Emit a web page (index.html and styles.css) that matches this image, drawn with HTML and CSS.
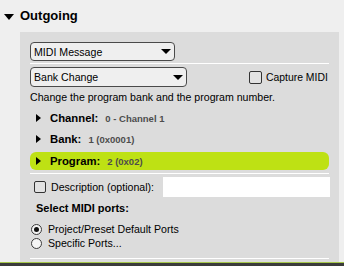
FILE: index.html
```html
<!DOCTYPE html>
<html>
<head>
<meta charset="utf-8">
<link rel="stylesheet" href="styles.css">
</head>
<body>
<div class="header"><span class="caret-down"></span><span class="title">Outgoing</span></div>
<div class="panel">
  <div class="select sel1"><span>MIDI Message</span><span class="arrow"></span></div>
  <div class="hr"></div>
  <div class="row2">
    <div class="select sel2"><span>Bank Change</span><span class="arrow"></span></div>
    <label class="check"><span class="box"></span><span>Capture MIDI</span></label>
  </div>
  <p class="desc">Change the program bank and the program number.</p>
  <div class="param"><span class="tri"></span><b>Channel:</b><span class="val">0 - Channel 1</span></div>
  <div class="param bank"><span class="tri"></span><b>Bank:</b><span class="val">1 (0x0001)</span></div>
  <div class="param active"><span class="tri"></span><b>Program:</b><span class="val">2 (0x02)</span></div>
  <div class="hr hr2"></div>
  <div class="descrow">
    <span class="box"></span><span class="dlabel">Description (optional):</span>
    <div class="input"></div>
  </div>
  <div class="ports-title">Select MIDI ports:</div>
  <div class="radio first"><span class="circle checked"></span><span>Project/Preset Default Ports</span></div>
  <div class="radio"><span class="circle"></span><span>Specific Ports...</span></div>
  <div class="hr hr3"></div>
</div>
<div class="footer"></div>
</body>
</html>
```
FILE: styles.css
```css
html, body { margin: 0; padding: 0; }
body {
  width: 344px;
  height: 266px;
  overflow: hidden;
  background: #efefef;
  font-family: "Liberation Sans", Arial, sans-serif;
  color: #000;
}
.header {
  height: 32px;
  display: flex;
  align-items: center;
  padding-left: 4px;
  box-sizing: border-box;
}
.caret-down {
  width: 0; height: 0;
  border-left: 5.5px solid transparent;
  border-right: 5.5px solid transparent;
  border-top: 6px solid #000;
  margin-top: 1px;
  margin-right: 6px;
}
.title {
  font-size: 13px;
  font-weight: bold;
  line-height: 16px;
}
.panel {
  margin-left: 20px;
  width: 319px;
  height: 230px;
  box-sizing: border-box;
  background: #dcdcdc;
  padding: 10px 10px 0 10px;
}
.select {
  box-sizing: border-box;
  border: 1px solid #4a4a4a;
  border-radius: 4px;
  background: #efefef;
  display: flex;
  align-items: center;
  justify-content: space-between;
  padding: 0 3px 0 3px;
  font-size: 10.6px;
}
.sel1 { width: 145px; height: 19px; }
.sel2 { width: 157px; height: 20px; }
.arrow {
  width: 0; height: 0;
  border-left: 5px solid transparent;
  border-right: 5px solid transparent;
  border-top: 5px solid #000;
}
.hr { height: 1px; background: #fff; margin-top: 2px; }
.row2 { display: flex; align-items: center; margin-top: 3px; height: 20px; }
.check {
  display: flex; align-items: center;
  margin-left: 62px;
  font-size: 10.4px;
}
.box {
  width: 13px; height: 13px;
  box-sizing: border-box;
  border: 1px solid #333;
  border-radius: 2px;
  background: #e2e2e2;
  margin-right: 4px;
  flex: none;
}
.desc {
  margin: 4px 0 0 0;
  font-size: 10.6px;
  line-height: 13px;
}
.param {
  display: flex;
  align-items: center;
  height: 18px;
  margin-top: 5px;
  padding-left: 6px;
  border-radius: 6px;
}
.param.bank { margin-top: 3px; }
.param.active { margin-top: 4px; background: #bee114; }
.tri {
  width: 0; height: 0;
  border-top: 4.5px solid transparent;
  border-bottom: 4.5px solid transparent;
  border-left: 5px solid #000;
  margin-right: 9px;
}
.param b { font-size: 11.3px; line-height: 18px; }
.val {
  margin-left: 7px;
  font-size: 9.5px;
  font-weight: bold;
  color: #4d4d4d;
}
.hr2 { margin-top: 3px; }
.descrow {
  display: flex;
  align-items: center;
  height: 20px;
  margin-top: 3px;
  padding-left: 4px;
}
.descrow .box { width: 12px; height: 12px; margin-right: 5px; }
.dlabel { font-size: 10.6px; }
.input {
  margin-left: auto;
  margin-right: -1px;
  width: 167px;
  height: 20px;
  background: #fff;
}
.ports-title {
  margin-top: 4px;
  padding-left: 6px;
  font-size: 11px;
  font-weight: bold;
  line-height: 14px;
}
.radio {
  display: flex;
  align-items: center;
  height: 14px;
  padding-left: 1px;
  font-size: 10.6px;
}
.radio.first { margin-top: 7px; }
.circle {
  width: 11px; height: 11px;
  box-sizing: border-box;
  border: 1px solid #3a3a3a;
  border-radius: 50%;
  background: #f4f4f4;
  margin-right: 6px;
  display: flex;
  align-items: center;
  justify-content: center;
}
.circle.checked::after {
  content: "";
  width: 5px; height: 5px;
  border-radius: 50%;
  background: #111;
}
.hr3 { margin-top: 8px; }
.footer {
  height: 4px;
  box-sizing: border-box;
  border-top: 1px solid #a6c84a;
  background: #3b3b3b;
}
```
